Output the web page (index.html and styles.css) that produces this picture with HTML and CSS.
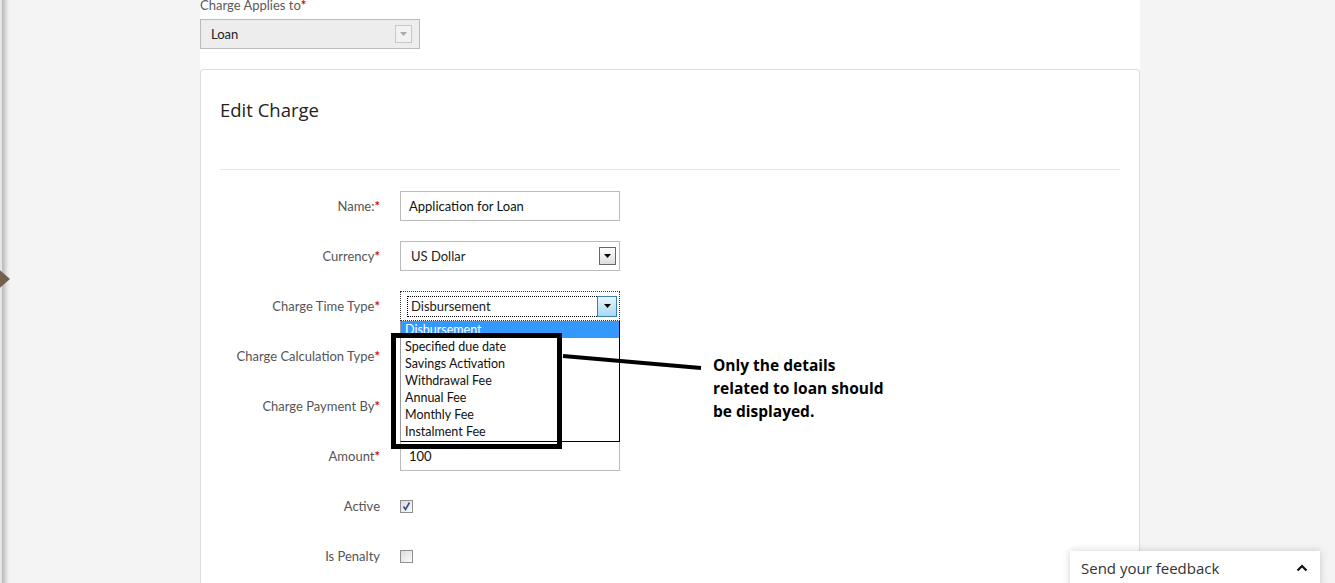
FILE: index.html
```html
<!DOCTYPE html>
<html>
<head>
<meta charset="utf-8">
<link rel="stylesheet" href="styles.css">
</head>
<body>
<div class="edge"><span class="edge-arrow"></span></div>
<main class="column">
  <section class="applies">
    <div class="applies-label">Charge Applies to<span class="req">*</span></div>
    <div class="select disabled">
      <span>Loan</span>
      <span class="arrow-box light"><svg width="7" height="4" viewBox="0 0 7 4"><path d="M0 0h7L3.5 4z" fill="#aaa"/></svg></span>
    </div>
  </section>
  <section class="card">
    <h1 class="card-title">Edit Charge</h1>
    <hr class="divider">
    <div class="form">
      <div class="row"><label class="lbl">Name:<span class="req">*</span></label><div class="input">Application for Loan</div></div>
      <div class="row"><label class="lbl">Currency<span class="req">*</span></label>
        <div class="select"><span>US Dollar</span><span class="arrow-box"><svg width="7" height="4" viewBox="0 0 7 4"><path d="M0 0h7L3.5 4z" fill="#000"/></svg></span></div></div>
      <div class="row"><label class="lbl">Charge Time Type<span class="req">*</span></label>
        <div class="select focused">
          <span class="focus-ring">Disbursement</span>
          <span class="arrow-box blue"><svg width="7" height="4" viewBox="0 0 7 4"><path d="M0 0h7L3.5 4z" fill="#000"/></svg></span>
          <ul class="dropdown">
            <li class="sel">Disbursement</li>
            <li>Specified due date</li>
            <li>Savings Activation</li>
            <li>Withdrawal Fee</li>
            <li>Annual Fee</li>
            <li>Monthly Fee</li>
            <li>Instalment Fee</li>
          </ul>
        </div></div>
      <div class="row"><label class="lbl">Charge Calculation Type<span class="req">*</span></label><div class="input blank"></div></div>
      <div class="row"><label class="lbl">Charge Payment By<span class="req">*</span></label><div class="input blank"></div></div>
      <div class="row"><label class="lbl">Amount<span class="req">*</span></label><div class="input">100</div></div>
      <div class="row"><label class="lbl">Active</label><span class="check"><svg width="11" height="11" viewBox="0 0 11 11"><path d="M2.5 5.5l2 3L8.5 1.5" fill="none" stroke="#3a4f8f" stroke-width="1.6"/></svg></span></div>
      <div class="row"><label class="lbl">Is Penalty</label><span class="check"></span></div>
    </div>
  </section>
</main>
<div class="annot-box"></div>
<svg class="annot-line" width="145" height="20" viewBox="0 0 145 20"><line x1="1" y1="3" x2="139" y2="15" stroke="#000" stroke-width="4"/></svg>
<p class="annot-text">Only the details<br>related to loan should<br>be displayed.</p>
<div class="feedback"><span>Send your feedback</span><svg width="12" height="8" viewBox="0 0 12 8"><path d="M1.5 6.5L6 2l4.5 4.5" fill="none" stroke="#111" stroke-width="2.2"/></svg></div>
</body>
</html>
```
FILE: styles.css
```css
html, body { margin: 0; padding: 0; }
body {
  background: #f4f4f4;
  width: 1335px;
  height: 583px;
  overflow: hidden;
  position: relative;
  font-family: "Lato", "Open Sans", sans-serif;
  font-size: 13px;
  color: #222;
}
.edge {
  position: absolute;
  left: 0; top: 0;
  width: 10px; height: 583px;
  background: linear-gradient(to right, #e6e6e6 0, #e6e6e6 2px, #b8b8b8 2px, #c8c8c8 4px, #e4e4e4 7px, #f4f4f4 10px);
}
.edge-arrow {
  position: absolute;
  left: -6px; top: 265px;
  width: 0; height: 0;
  border-top: 14px solid transparent;
  border-bottom: 14px solid transparent;
  border-left: 16px solid #74604f;
}
.column {
  margin-left: 200px;
  width: 940px;
  height: 583px;
  background: #fff;
}
.applies { height: 69px; display: flow-root; }
.applies-label {
  color: #5a5a5a;
  line-height: 16px;
  margin-top: -3px;
  margin-bottom: 6px;
}
.req { color: #e0001a; font-weight: bold; }
.select {
  box-sizing: border-box;
  width: 220px;
  height: 30px;
  border: 1px solid #bbb;
  background: #fff;
  display: flex;
  align-items: center;
  justify-content: space-between;
  padding: 0 3px 0 10px;
  position: relative;
}
.select.disabled { background: #ededed; padding-right: 7px; }
.arrow-box {
  box-sizing: border-box;
  width: 17px; height: 18px;
  border: 1px solid #666;
  background: linear-gradient(#fff, #ddd);
  display: flex; align-items: center; justify-content: center;
}
.arrow-box.light { border-color: #c8c8c8; background: #f2f2f2; }
.arrow-box.blue { width: 20px; height: 21px; border-color: #3c7fb1; background: linear-gradient(#eaf6fd, #a7d9f5); }
.select.focused { border: 1px dotted #333; padding: 0 2px 0 6px; }
.focus-ring {
  flex: 1;
  height: 19px;
  line-height: 19px;
  border: 1px dotted #000;
  border-right: none;
  padding-left: 3px;
}
.card {
  box-sizing: border-box;
  border: 1px solid #dcdcdc;
  border-bottom: none;
  border-radius: 4px 4px 0 0;
  height: 514px;
  padding: 0 19px;
}
.card-title {
  margin: 0;
  padding-top: 27px;
  font-family: "Open Sans", sans-serif;
  font-weight: normal;
  font-size: 18.5px;
  line-height: 26px;
  color: #222;
}
.divider {
  margin: 46px 0 0;
  border: none;
  border-top: 1px solid #e6e6e6;
}
.form { padding-top: 21px; display: flex; flex-direction: column; gap: 20px; }
.row { display: flex; align-items: center; height: 30px; gap: 20px; }
.lbl {
  width: 160px;
  text-align: right;
  color: #555;
}
.input {
  box-sizing: border-box;
  width: 220px; height: 30px;
  border: 1px solid #bbb;
  padding-left: 8px;
  line-height: 28px;
  color: #111;
}
.input.blank { border-color: transparent; }
.row:nth-child(6) .input { border-top-color: transparent; }
.check {
  box-sizing: border-box;
  width: 13px; height: 13px;
  border: 1px solid #8f8f8f;
  background: linear-gradient(135deg, #dcdcdc, #fbfbfb);
  display: flex; align-items: center; justify-content: center;
}
.dropdown {
  position: absolute;
  left: -1px; top: 29px;
  width: 220px;
  box-sizing: border-box;
  margin: 0; padding: 0;
  list-style: none;
  background: #fff;
  border: 1px solid #000;
  border-left-color: #999;
  border-top: none;
  height: 121px;
  z-index: 2;
}
.dropdown li {
  height: 17px;
  line-height: 17px;
  padding-left: 4px;
  color: #111;
  font-size: 12.5px;
}
.dropdown li.sel { background: #3399ff; color: #fff; }
.annot-box {
  position: absolute;
  left: 391px; top: 333px;
  width: 161px; height: 106px;
  border: 5px solid #000;
  z-index: 3;
}
.annot-line {
  position: absolute;
  left: 562px; top: 353px;
  z-index: 3;
}
.annot-text {
  position: absolute;
  left: 713px; top: 354px;
  margin: 0;
  font-family: "Open Sans", sans-serif;
  font-weight: bold;
  font-size: 15.5px;
  line-height: 23px;
  color: #000;
}
.feedback {
  position: absolute;
  left: 1070px; top: 551px;
  width: 250px; height: 40px;
  box-sizing: border-box;
  background: #fff;
  box-shadow: 0 0 8px rgba(0,0,0,0.18);
  padding: 7px 12px 0 11px;
  display: flex;
  justify-content: space-between;
  align-items: flex-start;
  font-family: "Open Sans", sans-serif;
  font-size: 15px;
  color: #333;
}
.feedback svg { margin-top: 6px; }
```
